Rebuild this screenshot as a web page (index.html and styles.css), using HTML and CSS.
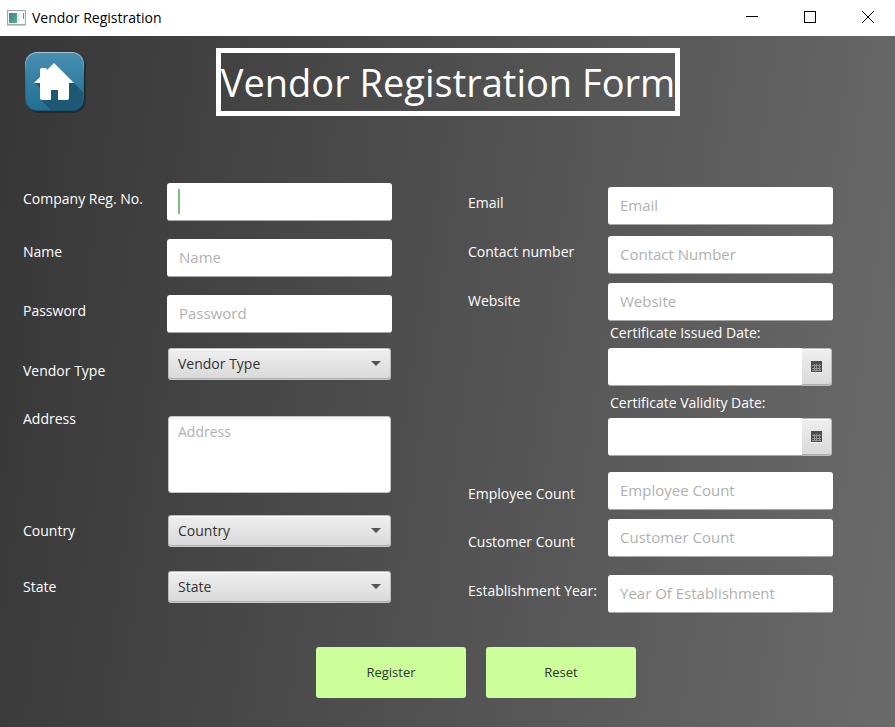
FILE: index.html
```html
<!DOCTYPE html>
<html lang="en">
<head>
<meta charset="utf-8">
<meta name="viewport" content="width=device-width, initial-scale=1">
<title>Vendor Registration</title>
<link rel="stylesheet" href="styles.css">
</head>
<body>
<header class="titlebar">
  <svg class="app-icon" width="19" height="16" viewBox="0 0 19 16" aria-hidden="true">
    <defs><linearGradient id="pane" x1="0" y1="0" x2="1" y2="1"><stop offset="0" stop-color="#3c7fa6"/><stop offset="1" stop-color="#5eb27c"/></linearGradient></defs>
    <rect x=".5" y=".5" width="18" height="14" fill="#f4f5f7" stroke="#a4a8b0"/>
    <path d="M0 15.5h19" stroke="#c9cacd"/>
    <rect x="2" y="3" width="8" height="10" fill="url(#pane)"/>
    <path d="M11.5 3v10" stroke="#dcdee2"/>
    <rect x="12" y="3" width="5" height="10" fill="#fff"/>
    <path d="M16.5 3v6" stroke="#5b8fc4"/>
  </svg>
  <span class="window-title">Vendor Registration</span>
  <div class="window-controls">
    <button class="window-button" type="button" aria-label="Minimize"><svg width="12" height="12" viewBox="0 0 12 12"><path d="M0 5.5h12" stroke="#000"/></svg></button>
    <button class="window-button" type="button" aria-label="Maximize"><svg width="12" height="12" viewBox="0 0 12 12"><rect x=".5" y=".5" width="11" height="11" fill="none" stroke="#000"/></svg></button>
    <button class="window-button" type="button" aria-label="Close"><svg width="12" height="12" viewBox="0 0 12 12"><path d="M0 0L12 12M12 0L0 12" stroke="#000"/></svg></button>
  </div>
</header>
<main class="page">
  <div class="heading">
    <button class="home" type="button" aria-label="Home">
      <svg width="62" height="62" viewBox="0 0 62 62">
        <defs>
          <linearGradient id="tile" x1="0" y1="0" x2="0" y2="1"><stop offset="0" stop-color="#478fb1"/><stop offset="1" stop-color="#216f94"/></linearGradient>
          <linearGradient id="rim" x1="0" y1="0" x2="0" y2="1"><stop offset="0" stop-color="#a9c6d3"/><stop offset=".4" stop-color="#3a7896"/><stop offset="1" stop-color="#175370"/></linearGradient>
          <clipPath id="tile-clip"><rect x="1" y="1" width="57" height="57" rx="11"/></clipPath>
        </defs>
        <rect x="1" y="1" width="60" height="60" rx="13" fill="#000" opacity=".25"/>
        <rect x="1" y="1" width="59" height="59" rx="12" fill="#12313f" opacity=".7"/>
        <rect x="0" y="0" width="59" height="59" rx="12" fill="url(#rim)"/>
        <rect x="1" y="1" width="57" height="57" rx="11" fill="url(#tile)"/>
        <path clip-path="url(#tile-clip)" d="M10 31L49 31L59 41V59H27L15 47V36Z" fill="#1d5874"/>
        <path d="M29 11L49 31H44V46Q44 48 42 48H34Q33 48 33 47V38H26V47Q26 48 25 48H17Q15 48 15 46V31H9L15 25V18Q15 16 17 16H20Q22 16 22 18Z" fill="#fff"/>
      </svg>
    </button>
    <h1 class="title">Vendor Registration Form</h1>
  </div>
  <form>
    <div class="columns">
      <div class="labels labels-company">
        <label for="reg">Company Reg. No.</label>
        <label for="name">Name</label>
        <label for="password">Password</label>
        <label for="type">Vendor Type</label>
        <label for="address">Address</label>
        <label for="country">Country</label>
        <label for="state">State</label>
      </div>
      <div class="fields fields-company">
        <input class="text-field active" id="reg" type="text">
        <input class="text-field" id="name" type="text" placeholder="Name">
        <input class="text-field" id="password" type="password" placeholder="Password">
        <div class="combo"><select id="type"><option>Vendor Type</option></select></div>
        <textarea id="address" placeholder="Address"></textarea>
        <div class="combo"><select id="country"><option>Country</option></select></div>
        <div class="combo"><select id="state"><option>State</option></select></div>
      </div>
      <div class="labels labels-contact">
        <label for="email">Email</label>
        <label for="phone">Contact number</label>
        <label for="website">Website</label>
        <label for="employees">Employee Count</label>
        <label for="customers">Customer Count</label>
        <label for="year">Establishment Year:</label>
      </div>
      <div class="fields fields-contact">
        <input class="text-field" id="email" type="email" placeholder="Email">
        <input class="text-field" id="phone" type="tel" placeholder="Contact Number">
        <input class="text-field" id="website" type="text" placeholder="Website">
        <label class="date-label" for="issued">Certificate Issued Date:</label>
        <div class="date">
          <input class="text-field" id="issued" type="text">
          <button class="date-button" type="button" aria-label="Choose issued date"><svg width="11" height="12" viewBox="0 0 11 12"><rect y="11" width="11" height="1" fill="#fff"/><rect width="11" height="11" fill="#4d4d4d"/><path d="M1 4.5h9M1 7.5h9M1 9.5h9M3.5 3v7M5.5 3v7M8.5 3v7" stroke="#b5b5b5" opacity=".7"/></svg></button>
        </div>
        <label class="date-label" for="valid">Certificate Validity Date:</label>
        <div class="date">
          <input class="text-field" id="valid" type="text">
          <button class="date-button" type="button" aria-label="Choose validity date"><svg width="11" height="12" viewBox="0 0 11 12"><rect y="11" width="11" height="1" fill="#fff"/><rect width="11" height="11" fill="#4d4d4d"/><path d="M1 4.5h9M1 7.5h9M1 9.5h9M3.5 3v7M5.5 3v7M8.5 3v7" stroke="#b5b5b5" opacity=".7"/></svg></button>
        </div>
        <input class="text-field" id="employees" type="text" placeholder="Employee Count">
        <input class="text-field" id="customers" type="text" placeholder="Customer Count">
        <input class="text-field" id="year" type="text" placeholder="Year Of Establishment">
      </div>
    </div>
    <div class="actions">
      <button class="action" type="button">Register</button>
      <button class="action" type="reset">Reset</button>
    </div>
  </form>
</main>
</body>
</html>
```
FILE: styles.css
```css
* {
  box-sizing: border-box;
}

body {
  margin: 0;
  min-height: 100vh;
  display: flex;
  flex-direction: column;
  font-family: "Segoe UI", "Open Sans", "Noto Sans", sans-serif;
  font-size: 14px;
  line-height: 20px;
  color: #fff;
}

button,
input,
select,
textarea {
  font: inherit;
  margin: 0;
  border: 0;
  outline: 0;
}

svg {
  display: block;
}

/* Window title bar */
.titlebar {
  display: flex;
  align-items: center;
  height: 36px;
  padding-left: 7px;
  background: #fff;
  color: #000;
}

.window-title {
  margin-left: 6px;
}

.window-controls {
  display: flex;
  height: 100%;
  margin-left: auto;
}

.window-button {
  display: grid;
  place-items: center;
  width: 58px;
  padding: 0 0 2px 4px;
  background: none;
}

/* Page */
.page {
  flex: 1;
  padding: 12px 0 29px;
  background: linear-gradient(98deg, #363636, #6b6b6b);
}

.heading {
  display: grid;
  grid-template-columns: 1fr auto 1fr;
  align-items: end;
  padding: 0 24px 0 25px;
}

.home {
  justify-self: start;
  padding: 0 0 2px;
  background: none;
}

.title {
  margin: 0;
  border: 5px solid #fff;
  font-size: 38px;
  font-weight: 400;
  line-height: 58px;
}

/* Form */
.columns {
  display: grid;
  grid-template-columns: 144px minmax(0, 301fr) 140px minmax(0, 225fr);
  padding: 67px 62px 0 23px;
}

.labels,
.fields {
  display: grid;
  align-content: start;
  align-items: start;
}

.labels {
  white-space: nowrap;
}

.labels-company {
  padding-top: 6px;
  grid-template-rows: 53px 59px 60px 48px 112px 56px 20px;
}

.fields-company {
  margin-right: 76px;
  grid-template-rows: 56px 56px 53px 68px 99px 56px 32px;
}

.labels-contact {
  padding-top: 10px;
  grid-template-rows: 49px 49px 193px 48px 49px 20px;
}

.fields-contact {
  padding-top: 4px;
  grid-template-rows: 49px 47px 40px 25px 45px 25px 54px 47px 56px 38px;
}

.text-field {
  width: 100%;
  height: 38px;
  padding: 0 12px 2px;
  border-bottom: 1px solid #a8a8a8;
  border-radius: 3px;
  background: #fff;
  color: #333;
  font-size: 15px;
}

.active {
  background: linear-gradient(#7bbf7e, #7bbf7e) 11px 6px / 2px 25px no-repeat #fff;
}

::placeholder {
  color: #b1b1b1;
  opacity: 1;
}

.combo {
  position: relative;
  margin: 0 1px;
}

.combo::after {
  content: "";
  position: absolute;
  top: 13px;
  right: 10px;
  border: 5px solid transparent;
  border-top-color: #555;
  border-bottom: 0;
  pointer-events: none;
}

select {
  display: block;
  appearance: none;
  width: 100%;
  height: 32px;
  padding: 0 9px;
  border: 1px solid #bababa;
  border-bottom-color: #c8c8c8;
  border-radius: 3px;
  background: linear-gradient(#efefef, #d9d9d9);
  box-shadow: inset 0 1px #fff, inset 0 -1px #b0b0b0;
  color: #333;
}

textarea {
  display: block;
  height: 77px;
  margin: 0 1px;
  padding: 5px 9px;
  border: 1px solid #c4c4c4;
  border-radius: 3px;
  background: linear-gradient(#f3f3f3, #fff 5px);
  color: #333;
  resize: none;
}

.date-label {
  padding-left: 2px;
}

.date {
  display: flex;
  margin-right: 1px;
}

.date .text-field {
  flex: 1;
  min-width: 0;
  border-radius: 3px 0 0 3px;
}

.date-button {
  display: grid;
  place-items: center;
  width: 30px;
  height: 38px;
  padding: 0;
  border: 1px solid #bababa;
  border-left: 0;
  border-radius: 0 3px 3px 0;
  background: linear-gradient(#efefef, #d9d9d9);
  box-shadow: inset 0 1px #fff, inset 0 -1px #b0b0b0;
}

.actions {
  display: flex;
  justify-content: center;
  gap: 20px;
  margin-top: 34px;
  padding-left: 57px;
}

.action {
  width: 150px;
  height: 51px;
  padding: 0 0 2px;
  border-radius: 3px;
  background: #ccff99;
  color: #333;
  font-size: 13px;
}
```
